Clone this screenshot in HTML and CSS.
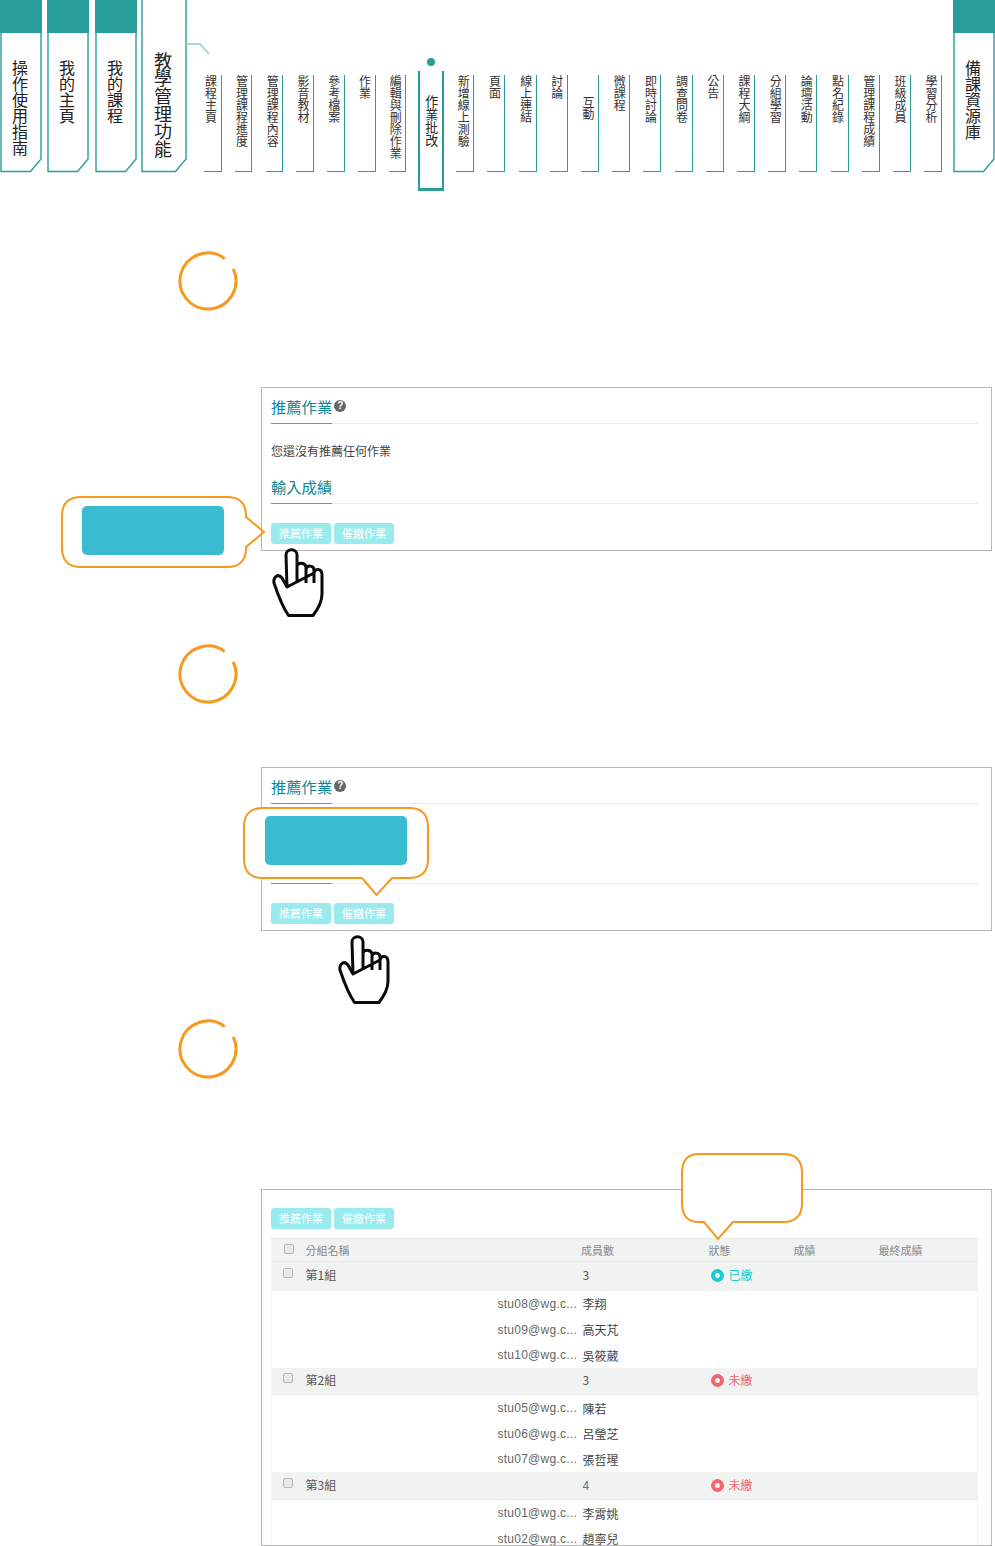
FILE: index.html
```html
<!DOCTYPE html>
<html lang="zh-Hant">
<head>
    <meta charset="UTF-8">
    <title>作業批改</title>
    <link rel="stylesheet" href="styles.css">
</head>
<body>

<!-- Top navigation -->
<nav class="nav">
    <a class="tab">
        <svg class="tab-shape" viewBox="0 0 42 173"><rect width="42" height="33" class="tab-fill"/><path d="M1 0V171.500H30.500L41 159V0"/></svg>
        <span class="tab-label">操作使用指南</span>
    </a>
    <a class="tab">
        <svg class="tab-shape" viewBox="0 0 42 173"><rect width="42" height="33" class="tab-fill"/><path d="M1 0V171.500H30.500L41 159V0"/></svg>
        <span class="tab-label">我的主頁</span>
    </a>
    <a class="tab">
        <svg class="tab-shape" viewBox="0 0 42 173"><rect width="42" height="33" class="tab-fill"/><path d="M1 0V171.500H30.500L41 159V0"/></svg>
        <span class="tab-label">我的課程</span>
    </a>
    <a class="tab tab-open">
        <svg class="tab-shape" viewBox="0 0 46 173"><path d="M1 0V171.500H34.500L45 159V0"/></svg>
        <span class="tab-label">教學管理功能</span>
        <svg class="tab-link" viewBox="0 0 24 12"><path d="M0 1H14L23 11"/></svg>
    </a>

    <ul class="subnav">
        <li class="sub"><span>課程主頁</span></li>
        <li class="sub"><span>管理課程進度</span></li>
        <li class="sub"><span>管理課程內容</span></li>
        <li class="sub"><span>影音教材</span></li>
        <li class="sub"><span>參考檔案</span></li>
        <li class="sub"><span>作業</span></li>
        <li class="sub"><span>編輯與刪除作業</span></li>
        <li class="sub sub-active"><span>作業批改</span></li>
        <li class="sub"><span>新增線上測驗</span></li>
        <li class="sub"><span>頁面</span></li>
        <li class="sub"><span>線上連結</span></li>
        <li class="sub"><span>討論</span></li>
        <li class="sub sub-low"><span>互動</span></li>
        <li class="sub"><span>微課程</span></li>
        <li class="sub"><span>即時討論</span></li>
        <li class="sub"><span>調查問卷</span></li>
        <li class="sub"><span>公告</span></li>
        <li class="sub"><span>課程大綱</span></li>
        <li class="sub"><span>分組學習</span></li>
        <li class="sub"><span>論壇活動</span></li>
        <li class="sub"><span>點名紀錄</span></li>
        <li class="sub"><span>管理課程成績</span></li>
        <li class="sub"><span>班級成員</span></li>
        <li class="sub"><span>學習分析</span></li>
    </ul>

    <a class="tab">
        <svg class="tab-shape" viewBox="0 0 42 173"><rect width="42" height="33" class="tab-fill"/><path d="M1 0V171.500H30.500L41 159V0"/></svg>
        <span class="tab-label">備課資源庫</span>
    </a>
</nav>

<!-- Step 1 -->
<section class="step step-one">
    <svg class="ring" viewBox="0 0 60 60"><path d="M46.660 7.490A28 28 0 1 0 55.200 17.800"/></svg>
    <div class="panel">
        <h3 class="title"><span>推薦作業</span><i class="help">?</i></h3>
        <p class="note">您還沒有推薦任何作業</p>
        <h3 class="title"><span>輸入成績</span></h3>
        <div class="actions">
            <button class="btn">推薦作業</button>
            <button class="btn">催繳作業</button>
        </div>
    </div>
    <svg class="bubble bubble-side" viewBox="0 0 206 74"><path d="M21 2H167Q186 2 186 21V22L204 37L186 52V53Q186 72 167 72H21Q2 72 2 53V21Q2 2 21 2Z"/></svg>
    <div class="mask mask-side"></div>
    <svg class="hand hand-one" viewBox="0 0 52 71"><path d="M15 40L14 8C14 1 25 1 25 8V36M25 20C25 15 33 15 34 20V36M34 22C35 18 42 18 42 23V36M42 26C43 21 50 21 50 28V47C50 55 46 62 41 68.500H16.500C12 62 6 48 2 36C1 30 6 26 10 31L15 40Z"/></svg>
</section>

<!-- Step 2 -->
<section class="step step-two">
    <svg class="ring" viewBox="0 0 60 60"><path d="M46.660 7.490A28 28 0 1 0 55.200 17.800"/></svg>
    <div class="panel">
        <h3 class="title"><span>推薦作業</span><i class="help">?</i></h3>
        <div class="note"></div>
        <h3 class="title"><span>&nbsp;</span></h3>
        <div class="actions">
            <button class="btn">推薦作業</button>
            <button class="btn">催繳作業</button>
        </div>
    </div>
    <svg class="bubble bubble-down" viewBox="0 0 188 92"><path d="M21 2H167Q186 2 186 21V53Q186 72 167 72H150L134.500 89L120 72H21Q2 72 2 53V21Q2 2 21 2Z"/></svg>
    <div class="mask mask-down"></div>
    <svg class="hand hand-two" viewBox="0 0 52 71"><path d="M15 40L14 8C14 1 25 1 25 8V36M25 20C25 15 33 15 34 20V36M34 22C35 18 42 18 42 23V36M42 26C43 21 50 21 50 28V47C50 55 46 62 41 68.500H16.500C12 62 6 48 2 36C1 30 6 26 10 31L15 40Z"/></svg>
</section>

<!-- Step 3 -->
<section class="step step-three">
    <svg class="ring" viewBox="0 0 60 60"><path d="M46.660 7.490A28 28 0 1 0 55.200 17.800"/></svg>
    <div class="panel panel-list">
        <div class="actions">
            <button class="btn">推薦作業</button>
            <button class="btn">催繳作業</button>
        </div>
        <table class="groups">
            <colgroup>
                <col class="c-check"><col class="c-name"><col class="c-mail"><col class="c-count"><col class="c-state"><col class="c-score"><col>
            </colgroup>
            <tr class="head">
                <td><i class="check"></i></td><td colspan="2">分組名稱</td><td class="head-count">成員數</td><td>狀態</td><td>成績</td><td>最終成績</td>
            </tr>
            <tr class="group group-first">
                <td><i class="check"></i></td><td colspan="2">第1組</td><td>3</td>
                <td class="paid"><i class="dot"></i>已繳</td><td></td><td></td>
            </tr>
            <tr class="member"><td colspan="2"></td><td>stu08@wg.c...</td><td colspan="4">李翔</td></tr>
            <tr class="member"><td colspan="2"></td><td>stu09@wg.c...</td><td colspan="4">高天芃</td></tr>
            <tr class="member"><td colspan="2"></td><td>stu10@wg.c...</td><td colspan="4">吳筱葳</td></tr>
            <tr class="group">
                <td><i class="check"></i></td><td colspan="2">第2組</td><td>3</td>
                <td class="unpaid"><i class="dot"></i>未繳</td><td></td><td></td>
            </tr>
            <tr class="member"><td colspan="2"></td><td>stu05@wg.c...</td><td colspan="4">陳若</td></tr>
            <tr class="member"><td colspan="2"></td><td>stu06@wg.c...</td><td colspan="4">呂瑩芝</td></tr>
            <tr class="member"><td colspan="2"></td><td>stu07@wg.c...</td><td colspan="4">張哲瑆</td></tr>
            <tr class="group group-last">
                <td><i class="check"></i></td><td colspan="2">第3組</td><td class="count-link">4</td>
                <td class="unpaid"><i class="dot"></i>未繳</td><td></td><td></td>
            </tr>
            <tr class="member"><td colspan="2"></td><td>stu01@wg.c...</td><td colspan="4">李霄姚</td></tr>
            <tr class="member"><td colspan="2"></td><td>stu02@wg.c...</td><td colspan="4">趙寧兒</td></tr>
        </table>
    </div>
    <svg class="bubble bubble-state" viewBox="0 0 124 90"><path d="M19 2H103Q122 2 122 21V51Q122 70 103 70H53L38 87L24 70H19Q2 70 2 51V21Q2 2 19 2Z"/></svg>
</section>

</body>
</html>
```
FILE: styles.css
```css
* {
    box-sizing: border-box;
}
body {
    margin: 0;
    height: 1546px;
    overflow: hidden;
    background: #fff;
    color: #444;
    font-family: "Noto Sans CJK TC", "Liberation Sans", sans-serif;
    font-size: 12px;
}

/* top nav */
.nav {
    display: flex;
    align-items: flex-start;
    height: 191px;
}
.tab {
    position: relative;
    flex: none;
    width: 42px;
    height: 173px;
    margin-right: 5px;
    color: #222;
}
.tab:nth-child(2) {
    margin-right: 6px;
}
.tab:nth-child(3) {
    margin-right: 4px;
}
.tab-shape {
    position: absolute;
    left: 0;
    top: 0;
    width: 100%;
    height: 100%;
    fill: none;
    stroke: #2a9e9b;
    stroke-width: 1.4;
}
.tab-fill {
    fill: #2a9e9b;
    stroke: none;
}
.tab-label {
    position: absolute;
    left: 11px;
    top: 60px;
    writing-mode: vertical-rl;
    text-orientation: upright;
    font-size: 16px;
    line-height: 18px;
}
.tab-open {
    width: 46px;
    margin-right: 17px;
}
.tab-open .tab-label {
    left: 12px;
    top: 52px;
    font-size: 18px;
    line-height: 20px;
    letter-spacing: -0.4px;
}
.tab-link {
    position: absolute;
    left: 45px;
    top: 43px;
    width: 24px;
    height: 12px;
    fill: none;
    stroke: #8fd0cd;
    stroke-width: 1.4;
}
.subnav {
    display: flex;
    align-items: flex-start;
    gap: 13.200px;
    width: 738px;
    margin: 0 11px 0 0;
    padding: 0;
    list-style: none;
}
.sub {
    flex: none;
    width: 18px;
    height: 97px;
    margin-top: 75px;
    padding-right: 3px;
    border-right: 1px solid #2a9e9b;
    border-bottom: 1px solid #2a9e9b;
    color: #333;
    writing-mode: vertical-rl;
    text-orientation: upright;
    line-height: 13px;
}
.sub:nth-child(-n+7) {
    width: 17.600px;
}
.sub-low span {
    display: block;
    margin-top: 21px;
}
.sub-active {
    position: relative;
    width: 26px;
    height: 120px;
    margin: 71px -1.200px 0;
    padding: 24px 0 0 0;
    border: 2px solid #2a9e9b;
    border-top: none;
    border-bottom-width: 3px;
    color: #222;
    font-size: 13px;
    line-height: 22px;
}
.sub-active::before {
    content: "";
    position: absolute;
    left: 7px;
    top: -13px;
    width: 8px;
    height: 8px;
    border-radius: 50%;
    background: #2a9e9b;
}

/* steps */
.step {
    position: relative;
}
.ring {
    display: block;
    width: 60px;
    height: 60px;
    margin-left: 178px;
    fill: none;
    stroke: #f7991f;
    stroke-width: 3;
}
.step-one {
    padding-top: 60px;
}
.step-two {
    padding-top: 93px;
}
.step-three {
    padding-top: 88px;
}
.panel {
    height: 164px;
    margin: 76px 3px 0 261px;
    padding: 0 13px 0 9px;
    border: 1px solid #b7b7b7;
    overflow: hidden;
}
.step-two .panel {
    margin-top: 63px;
}
.panel-list {
    height: 357px;
    margin-top: 110px;
}
.panel-list .actions {
    margin-top: 18px;
}
.title {
    height: 36px;
    margin: 0;
    padding-top: 5px;
    border-bottom: 1px solid #ececec;
    color: #0b8794;
    font-size: 15.300px;
    font-weight: normal;
    line-height: 27px;
}
.title span {
    display: inline-block;
    height: 31px;
    min-width: 61px;
    border-bottom: 1px solid #1fb6c6;
}
.help {
    display: inline-block;
    width: 12px;
    height: 12px;
    margin-left: 2px;
    border-radius: 50%;
    background: #666;
    color: #fff;
    font-family: "Liberation Sans", sans-serif;
    font-size: 10px;
    font-style: normal;
    font-weight: bold;
    line-height: 12px;
    text-align: center;
    vertical-align: 4px;
}
.note {
    height: 44px;
    margin: 0;
    color: #444;
    line-height: 53px;
}
.actions {
    display: flex;
    gap: 3px;
    margin-top: 19px;
}
.btn {
    width: 60px;
    height: 21px;
    padding: 0;
    border: none;
    border-radius: 3px;
    background: #9aebee;
    color: #fff;
    font-family: inherit;
    font-size: 11px;
    line-height: 21px;
}

/* callouts */
.bubble {
    position: absolute;
    fill: #fff;
    stroke: #f7991f;
    stroke-width: 2;
}
.bubble-side {
    left: 60px;
    top: 304px;
    width: 206px;
    height: 74px;
    fill: none;
}
.bubble-down {
    left: 241.500px;
    top: 255px;
    width: 188px;
    height: 92px;
}
.mask {
    position: absolute;
    width: 142px;
    height: 49px;
    border-radius: 5px;
    background: #39bbd0;
}
.mask-side {
    left: 82px;
    top: 315px;
}
.mask-down {
    left: 265px;
    top: 265px;
}
.bubble-state {
    left: 680px;
    top: 221px;
    width: 124px;
    height: 90px;
}
.hand {
    position: absolute;
    width: 52px;
    height: 71px;
    fill: #fff;
    stroke: #0a0a0a;
    stroke-width: 3;
    stroke-linejoin: round;
}
.hand-one {
    left: 272px;
    top: 356px;
}
.hand-two {
    left: 338px;
    top: 383px;
}

/* group table */
.groups {
    width: 707px;
    margin-top: 9px;
    border-collapse: collapse;
    table-layout: fixed;
    border-left: 1px solid #f2f2f2;
    border-right: 1px solid #f2f2f2;
    font-size: 12px;
}
.groups td {
    padding: 0;
    white-space: nowrap;
}
.c-check {
    width: 34px;
}
.c-name {
    width: 192px;
}
.c-mail,
.c-score {
    width: 85px;
}
.c-count {
    width: 126px;
}
.c-state {
    width: 85px;
}
.head {
    height: 23px;
    border-top: 1px solid #e8e8e8;
    border-bottom: 1px solid #e8e8e8;
    background: #f1f3f3;
    color: #888;
}
.head td {
    font-size: 11px;
}
.head .head-count {
    text-indent: -1.500px;
}
.group {
    height: 27px;
    border-bottom: 1px solid #e8e8e8;
    background: #f1f3f3;
    color: #555;
}
.group td {
    padding-bottom: 2px;
}
.group-first {
    height: 29px;
    border-bottom: none;
}
.group-first td {
    padding-bottom: 4px;
}
.group-last {
    height: 28px;
}
.member {
    height: 25.700px;
    color: #444;
}
.member td {
    padding-top: 1px;
}
.member td:nth-child(2) {
    color: #666;
    font-family: "Liberation Sans", sans-serif;
    letter-spacing: 0.25px;
}
.count-link {
    color: #3f7fa8;
}
.check {
    display: block;
    width: 10px;
    height: 10px;
    margin: -3px 0 0 12px;
    border: 1px solid #b5b5b5;
    border-radius: 2px;
    background: #e9e9e9;
}
.group .check {
    margin-left: 11px;
}
.paid {
    color: #1ccad4;
}
.unpaid {
    color: #f4656d;
}
.dot {
    display: inline-block;
    width: 13px;
    height: 13px;
    margin: 0 5px 0 2px;
    border: 4px solid currentColor;
    border-radius: 50%;
    vertical-align: -2px;
}
```
